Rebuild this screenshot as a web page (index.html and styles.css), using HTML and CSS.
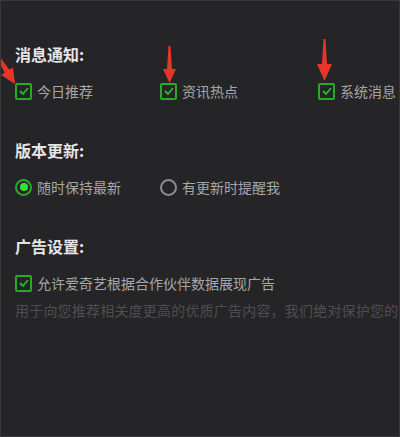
FILE: index.html
```html
<!DOCTYPE html>
<html>
<head>
  <meta charset="utf-8">
  <title>设置</title>
  <link rel="stylesheet" href="styles.css">
</head>
<body>
  <div class="panel">
    <div class="section">
      <div class="title">消息通知:</div>
      <div class="row cols3">
        <label class="item">
          <span class="check"><svg width="12" height="12" viewBox="0 0 12 12"><polyline points="2,6 5,9 10,3" fill="none" stroke="#2fb82f" stroke-width="1.8"/></svg></span>
          今日推荐
        </label>
        <label class="item">
          <span class="check"><svg width="12" height="12" viewBox="0 0 12 12"><polyline points="2,6 5,9 10,3" fill="none" stroke="#2fb82f" stroke-width="1.8"/></svg></span>
          资讯热点
        </label>
        <label class="item">
          <span class="check"><svg width="12" height="12" viewBox="0 0 12 12"><polyline points="2,6 5,9 10,3" fill="none" stroke="#2fb82f" stroke-width="1.8"/></svg></span>
          系统消息
        </label>
      </div>
    </div>

    <div class="section">
      <div class="title">版本更新:</div>
      <div class="row cols3">
        <label class="item">
          <span class="radio on"><span class="dot"></span></span>
          随时保持最新
        </label>
        <label class="item">
          <span class="radio"></span>
          有更新时提醒我
        </label>
      </div>
    </div>

    <div class="section">
      <div class="title">广告设置:</div>
      <div class="row">
        <label class="item">
          <span class="check"><svg width="12" height="12" viewBox="0 0 12 12"><polyline points="2,6 5,9 10,3" fill="none" stroke="#2fb82f" stroke-width="1.8"/></svg></span>
          允许爱奇艺根据合作伙伴数据展现广告
        </label>
      </div>
      <div class="desc">用于向您推荐相关度更高的优质广告内容，我们绝对保护您的</div>
    </div>
  </div>

  <!-- 标注箭头 -->
  <svg class="arrows" width="400" height="437" viewBox="0 0 400 437">
    <g fill="#e8352c">
      <polygon transform="translate(14,83) rotate(-32)" points="-1.2,-34 1.2,-34 2.8,-15 7,-15 0,0 -7,-15 -2.8,-15"/>
      <polygon transform="translate(168.5,82)" points="-1,-37 1,-37 2.5,-14 6.5,-14 0,0 -6.5,-14 -2.5,-14"/>
      <polygon transform="translate(323.5,80)" points="-1,-42 1,-42 2.5,-17 7.5,-17 0,0 -7.5,-17 -2.5,-17"/>
    </g>
  </svg>
</body>
</html>
```

FILE: styles.css
```css
/* 设置面板 */
html, body {
  height: 100%;
}

body {
  margin: 0;
  background: #252527;
  font-family: "Noto Sans CJK SC", "Noto Sans", sans-serif;
  box-sizing: border-box;
  border: 1px solid #38383b;
  overflow: hidden;
  position: relative;
}

.panel {
  padding: 43px 0 0 14px;
}

.section + .section {
  margin-top: 39px;
}

.title {
  font-size: 16px;
  line-height: 20px;
  font-weight: bold;
  color: #e4e4e4;
  margin-bottom: 17px;
}

.row {
  display: flex;
}

.cols3 {
  display: grid;
  grid-template-columns: 145px 158px auto;
}

.item {
  display: flex;
  align-items: center;
  gap: 5px;
  font-size: 14px;
  line-height: 20px;
  color: #a6a6a6;
  white-space: nowrap;
}

.check {
  width: 13px;
  height: 13px;
  border: 2px solid #2aa82a;
  border-radius: 2px;
  display: flex;
  align-items: center;
  justify-content: center;
}

.radio {
  width: 13px;
  height: 13px;
  border: 2px solid #8c8c8c;
  border-radius: 50%;
  display: flex;
  align-items: center;
  justify-content: center;
}

.radio.on {
  border-color: #2aa82a;
}

.radio .dot {
  width: 8px;
  height: 8px;
  border-radius: 50%;
  background: #36e036;
}

.desc {
  margin-top: 7px;
  font-size: 14px;
  line-height: 20px;
  letter-spacing: 0.2px;
  color: #4e4e51;
  white-space: nowrap;
}

.arrows {
  position: absolute;
  top: 0;
  left: 0;
  pointer-events: none;
}
```
